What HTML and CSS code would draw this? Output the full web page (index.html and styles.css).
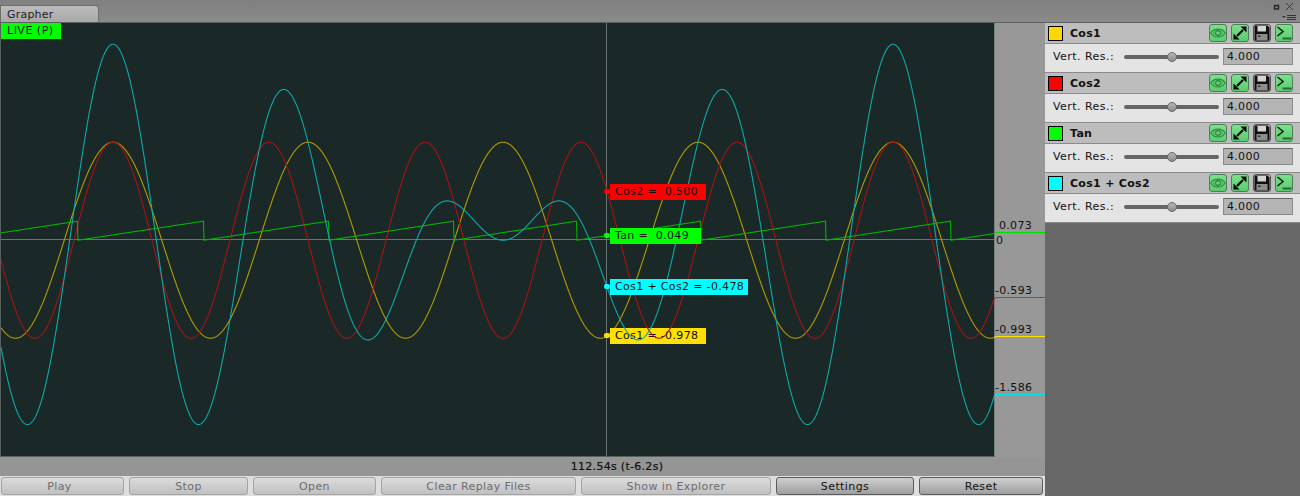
FILE: index.html
```html
<!DOCTYPE html>
<html lang="en">
<head>
    <meta charset="UTF-8">
    <title>Grapher</title>
    <link rel="stylesheet" href="styles.css">
</head>
<body>

<!-- Shared button icons -->
<svg class="icon-defs" width="0" height="0">
    <symbol id="icon-eye" viewBox="0 0 16 16">
        <path d="M0.800 8 C4 2.800 12 2.800 15.200 8 C12 13.200 4 13.200 0.800 8 Z" fill="none" stroke="#2f8a42" stroke-width="1.2"/>
        <path d="M3 8 C5 5.500 11 5.500 13 8 C11 10.500 5 10.500 3 8 Z" fill="none" stroke="#3f9a50" stroke-width="0.8"/>
        <circle cx="8" cy="8" r="2.400" fill="none" stroke="#2f8a42" stroke-width="1.100"/>
    </symbol>
    <symbol id="icon-expand" viewBox="0 0 16 16">
        <path d="M5 11 L11 5" stroke="#000" stroke-width="2.200"/>
        <path d="M14.500 1.500 L14.500 7.500 L8.500 1.500 Z" fill="#000"/>
        <path d="M1.500 14.500 L1.500 8.500 L7.500 14.500 Z" fill="#000"/>
    </symbol>
    <symbol id="icon-save" viewBox="0 0 16 16">
        <path d="M0.500 0.500 H13.500 L15.500 2.500 V15.500 H0.500 Z" fill="#101010"/>
        <rect x="3.500" y="1" width="8.500" height="5.500" fill="#d4d4d4"/>
        <rect x="2.500" y="9" width="11" height="6" fill="#8c8c8c"/>
        <rect x="4" y="10.500" width="2.500" height="1.500" fill="#333"/>
    </symbol>
    <symbol id="icon-console" viewBox="0 0 16 16">
        <path d="M1.500 2 L7 6.500 L1.500 11" fill="none" stroke="#06240e" stroke-width="1.600"/>
        <path d="M6.500 13.500 H15.500" stroke="#246a38" stroke-width="2"/>
    </symbol>
</svg>

<div class="tab-bar">
    <div class="tab">Grapher</div>
    <div class="win-controls">
        <svg width="30" height="22" viewBox="0 0 30 22">
            <rect x="4.500" y="5.500" width="4" height="3.500" fill="none" stroke="#222" stroke-width="1.400"/>
            <path d="M16 3 L23 10 M23 3 L16 10" stroke="#3a3a3a" stroke-width="1"/>
            <path d="M12 16 H16 L14 18 Z" fill="#333"/>
            <path d="M17 15.500 H26 M17 17.500 H26 M17 19.500 H26" stroke="#333" stroke-width="1"/>
        </svg>
    </div>
</div>

<div class="main">
    <div class="left">
        <!-- Curves and their value labels are added by graph.js -->
        <div class="graph" id="graph">
            <div class="plot">
                <div class="zero-line"></div>
                <div class="cursor-line"></div>
            </div>
            <div class="axis">
                <span class="axis-label tick-green">0.073</span>
                <span class="axis-label tick-zero">0</span>
                <span class="axis-label tick-red">-0.593</span>
                <span class="axis-label tick-yellow">-0.993</span>
                <span class="axis-label tick-cyan">-1.586</span>
            </div>
            <div class="live">LIVE (P)</div>
        </div>
        <div class="status">112.54s (t-6.2s)</div>
        <div class="toolbar">
            <button class="btn btn-play" disabled>Play</button>
            <button class="btn" disabled>Stop</button>
            <button class="btn" disabled>Open</button>
            <button class="btn" disabled>Clear Replay Files</button>
            <button class="btn" disabled>Show in Explorer</button>
            <button class="btn active">Settings</button>
            <button class="btn active">Reset</button>
        </div>
    </div>

    <div class="panel">
        <div class="series">
            <div class="series-head">
                <span class="swatch swatch-yellow"></span>
                <span class="series-name">Cos1</span>
                <span class="icon-btn"><svg><use href="#icon-eye"/></svg></span>
                <span class="icon-btn"><svg><use href="#icon-expand"/></svg></span>
                <span class="icon-btn off"><svg><use href="#icon-save"/></svg></span>
                <span class="icon-btn"><svg><use href="#icon-console"/></svg></span>
            </div>
            <div class="series-body">
                <span class="res-label">Vert. Res.:</span>
                <span class="slider"><span class="thumb"></span></span>
                <span class="res-input">4.000</span>
            </div>
        </div>
        <div class="series">
            <div class="series-head">
                <span class="swatch swatch-red"></span>
                <span class="series-name">Cos2</span>
                <span class="icon-btn"><svg><use href="#icon-eye"/></svg></span>
                <span class="icon-btn"><svg><use href="#icon-expand"/></svg></span>
                <span class="icon-btn off"><svg><use href="#icon-save"/></svg></span>
                <span class="icon-btn"><svg><use href="#icon-console"/></svg></span>
            </div>
            <div class="series-body">
                <span class="res-label">Vert. Res.:</span>
                <span class="slider"><span class="thumb"></span></span>
                <span class="res-input">4.000</span>
            </div>
        </div>
        <div class="series">
            <div class="series-head">
                <span class="swatch swatch-green"></span>
                <span class="series-name">Tan</span>
                <span class="icon-btn"><svg><use href="#icon-eye"/></svg></span>
                <span class="icon-btn"><svg><use href="#icon-expand"/></svg></span>
                <span class="icon-btn off"><svg><use href="#icon-save"/></svg></span>
                <span class="icon-btn"><svg><use href="#icon-console"/></svg></span>
            </div>
            <div class="series-body">
                <span class="res-label">Vert. Res.:</span>
                <span class="slider"><span class="thumb"></span></span>
                <span class="res-input">4.000</span>
            </div>
        </div>
        <div class="series">
            <div class="series-head">
                <span class="swatch swatch-cyan"></span>
                <span class="series-name">Cos1 + Cos2</span>
                <span class="icon-btn"><svg><use href="#icon-eye"/></svg></span>
                <span class="icon-btn"><svg><use href="#icon-expand"/></svg></span>
                <span class="icon-btn off"><svg><use href="#icon-save"/></svg></span>
                <span class="icon-btn"><svg><use href="#icon-console"/></svg></span>
            </div>
            <div class="series-body">
                <span class="res-label">Vert. Res.:</span>
                <span class="slider"><span class="thumb"></span></span>
                <span class="res-input">4.000</span>
            </div>
        </div>
    </div>
</div>

<script src="graph.js"></script>
</body>
</html>
```

FILE: styles.css
```css
* {
    box-sizing: border-box;
}

body {
    margin: 0;
    width: 1300px;
    height: 496px;
    overflow: hidden;
    background-color: #686868;
    font-family: "DejaVu Sans", sans-serif;
    font-size: 11px;
    color: #111;
}

.icon-defs {
    position: absolute;
}

/* Window tab strip */
.tab-bar {
    display: flex;
    justify-content: space-between;
    height: 23px;
    padding-top: 5px;
    background: linear-gradient(#808080, #8a8a8a);
    border-bottom: 1px solid #5e5e5e;
}

.tab {
    width: 99px;
    height: 17px;
    padding: 2px 0 0 6px;
    background: linear-gradient(#bcbcbc, #a8a8a8);
    border: 1px solid #6e6e6e;
    border-bottom: none;
    border-radius: 0 4px 0 0;
    color: #222;
    letter-spacing: 0.2px;
}

.win-controls {
    margin-top: -5px;
    height: 22px;
}

.main {
    display: flex;
    height: 473px;
}

.left {
    width: 1045px;
    display: flex;
    flex-direction: column;
}

/* Graph area */
.graph {
    position: relative;
    display: flex;
    height: 435px;
    overflow: hidden;
    background-color: #989898;
}

.plot {
    position: relative;
    width: 995px;
    height: 434px;
    background-color: #1a2828;
    border-left: 1px solid #56605e;
    border-right: 1px solid #74807e;
    border-bottom: 1px solid #56605e;
}

.zero-line {
    position: absolute;
    left: 0;
    right: 0;
    top: 216px;
    height: 1px;
    background-color: #6a7472;
}

.cursor-line {
    position: absolute;
    left: 605px;
    top: 0;
    bottom: 0;
    width: 1px;
    background-color: #6a7472;
}

.axis {
    position: relative;
    flex: 1;
}

.axis-label {
    position: absolute;
    letter-spacing: 0.3px;
    line-height: 13px;
}

.tick-green { left: 4px; top: 196px; }
.tick-zero { left: 1px; top: 211px; }
.tick-red { left: 0; top: 261px; }
.tick-yellow { left: 0; top: 300px; }
.tick-cyan { left: 0; top: 358px; }

.live {
    position: absolute;
    left: 1px;
    top: 0;
    width: 60px;
    height: 16px;
    padding-left: 6px;
    line-height: 16px;
    background-color: #00ff00;
    letter-spacing: 0.5px;
}

.curve {
    position: absolute;
    left: 0;
    top: 0;
}

.value-label {
    position: absolute;
    left: 610px;
    height: 16px;
    padding-left: 5px;
    line-height: 16px;
    white-space: pre;
    letter-spacing: 0.35px;
}

/* Little marker that joins a label to the cursor */
.value-label::before {
    content: "";
    position: absolute;
    left: -6px;
    top: 5px;
    width: 6px;
    height: 5px;
    border-radius: 2px;
    background-color: inherit;
}

/* Bottom rows */
.status {
    height: 18px;
    padding-left: 189px;
    line-height: 17px;
    text-align: center;
    background-color: #959595;
    font-weight: 500;
    letter-spacing: 0.3px;
    -webkit-text-stroke: 0.2px #111;
}

.toolbar {
    display: grid;
    grid-template-columns: 123px 119px 123px 195px 190px 138px 124px;
    gap: 5px;
    height: 20px;
    padding: 1px 0 0 1px;
    background-color: #dedede;
}

.btn {
    height: 18px;
    padding: 0;
    font-family: inherit;
    font-size: 11px;
    letter-spacing: 0.4px;
    border: 1px solid #a4a4a4;
    border-radius: 3px;
    background: linear-gradient(#dcdcdc, #c0c0c0);
    color: #6c6c6c;
}

.btn-play {
    padding-right: 6px;
}

.btn.active {
    border-color: #5c5c5c;
    background: linear-gradient(#cfcfcf, #9e9e9e);
    color: #111;
}

/* Right hand series list */
.panel {
    width: 255px;
}

.series-head {
    display: flex;
    align-items: center;
    height: 21px;
    padding: 0 7px 0 3px;
    background-color: #bdbdbd;
    border-bottom: 1px solid #8a8a8a;
}

.swatch {
    width: 15px;
    height: 15px;
    margin-right: 7px;
    border: 1px solid #000;
}

.swatch-yellow { background-color: #ffd800; }
.swatch-red { background-color: #ff0000; }
.swatch-green { background-color: #00ff00; }
.swatch-cyan { background-color: #00ffff; }

.series-name {
    flex: 1;
    font-weight: bold;
    letter-spacing: 0.3px;
}

.icon-btn {
    width: 18px;
    height: 18px;
    margin-left: 4px;
    border: 1px solid #4c7c58;
    border-radius: 3px;
    background: linear-gradient(#7be08b, #5ccb70);
}

.icon-btn.off {
    border-color: #555;
    background: linear-gradient(#c4c4c4, #a0a0a0);
}

.icon-btn svg {
    display: block;
    width: 16px;
    height: 16px;
}

.series-body {
    display: flex;
    align-items: center;
    height: 29px;
    padding: 0 7px 4px 8px;
    background-color: #e4e4e4;
    border-bottom: 1px solid #8a8a8a;
}

.res-label {
    width: 71px;
    letter-spacing: 0.45px;
}

.slider {
    position: relative;
    width: 95px;
    height: 4px;
    margin-top: 1px;
    border-radius: 2px;
    background-color: #666;
}

.thumb {
    position: absolute;
    left: 43px;
    top: -3px;
    width: 10px;
    height: 10px;
    border-radius: 50%;
    border: 1px solid #666;
    background: linear-gradient(#b4b4b4, #8e8e8e);
}

.res-input {
    width: 70px;
    height: 17px;
    margin-left: 4px;
    padding-left: 3px;
    line-height: 16px;
    background-color: #b4b4b4;
    border: 1px solid #8a8a8a;
    border-top-color: #666;
    letter-spacing: 0.3px;
}
```

FILE: graph.js
```js
// Graph geometry, in pixels inside the graph box
const plotWidth = 994;
const graphWidth = 1045;
const graphHeight = 435;
const zeroY = 217.2;
const scale = 98;

const cos1 = x => Math.cos(2 * Math.PI * (x - 113) / 195);
const cos2 = x => Math.cos(2 * Math.PI * (x - 113) / 156);

// Saw wave: x positions where it drops back to zero
const sawResets = [-47, 78, 204, 329, 454, 577, 701, 826, 951, 1076];

function saw(x) {
    const next = sawResets.findIndex(r => r > x);
    const start = sawResets[next - 1];
    const end = sawResets[next];
    return (x - start) / (end - start) * 0.195;
}

// Draw order matters: only the Cos1 label sits under the later curves
const series = [
    { fn: cos1, line: '#b09c00', tick: '#ffe000', tickY: 313.5, bg: '#ffe000', text: 'Cos1 = -0.978', top: 305, width: 96, under: true },
    { fn: cos2, line: '#a81212', tick: '#d82828', tickY: 274.5, bg: '#ff0000', text: 'Cos2 =  0.500', top: 161, width: 96 },
    { fn: saw, line: '#00b400', tick: '#00e000', tickY: 209.5, bg: '#00ff00', text: 'Tan =  0.049', top: 205, width: 91 },
    { fn: x => cos1(x) + cos2(x), line: '#10a8a8', tick: '#00e8e8', tickY: 371.5, bg: '#00ffff', text: 'Cos1 + Cos2 = -0.478', top: 256, width: 138 }
];

const graph = document.getElementById('graph');
const svgNS = 'http://www.w3.org/2000/svg';

function addPath(svg, d, color) {
    const path = document.createElementNS(svgNS, 'path');
    path.setAttribute('d', d);
    path.setAttribute('fill', 'none');
    path.setAttribute('stroke', color);
    path.setAttribute('stroke-width', '1.1');
    svg.appendChild(path);
}

function addLabel(item) {
    const label = document.createElement('div');
    label.className = 'value-label';
    label.textContent = item.text;
    label.style.top = item.top + 'px';
    label.style.width = item.width + 'px';
    label.style.backgroundColor = item.bg;
    graph.appendChild(label);
}

series.forEach(item => {
    const svg = document.createElementNS(svgNS, 'svg');
    svg.setAttribute('class', 'curve');
    svg.setAttribute('width', graphWidth);
    svg.setAttribute('height', graphHeight);

    let d = '';
    for (let x = 1; x <= plotWidth; x += 0.5) {
        const y = zeroY - scale * item.fn(x);
        d += (d ? ' L' : 'M') + x + ' ' + y.toFixed(2);
    }
    addPath(svg, d, item.line);

    // Link from the end of the curve out to the axis tick
    const endY = zeroY - scale * item.fn(plotWidth);
    addPath(svg, 'M' + plotWidth + ' ' + endY.toFixed(2) + ' L996 ' + item.tickY + ' H' + graphWidth, item.tick);
    graph.appendChild(svg);

    if (item.under) addLabel(item);
});

series.filter(item => !item.under).forEach(addLabel);

// LIVE badge stays on top of the curves
graph.appendChild(graph.querySelector('.live'));
```
